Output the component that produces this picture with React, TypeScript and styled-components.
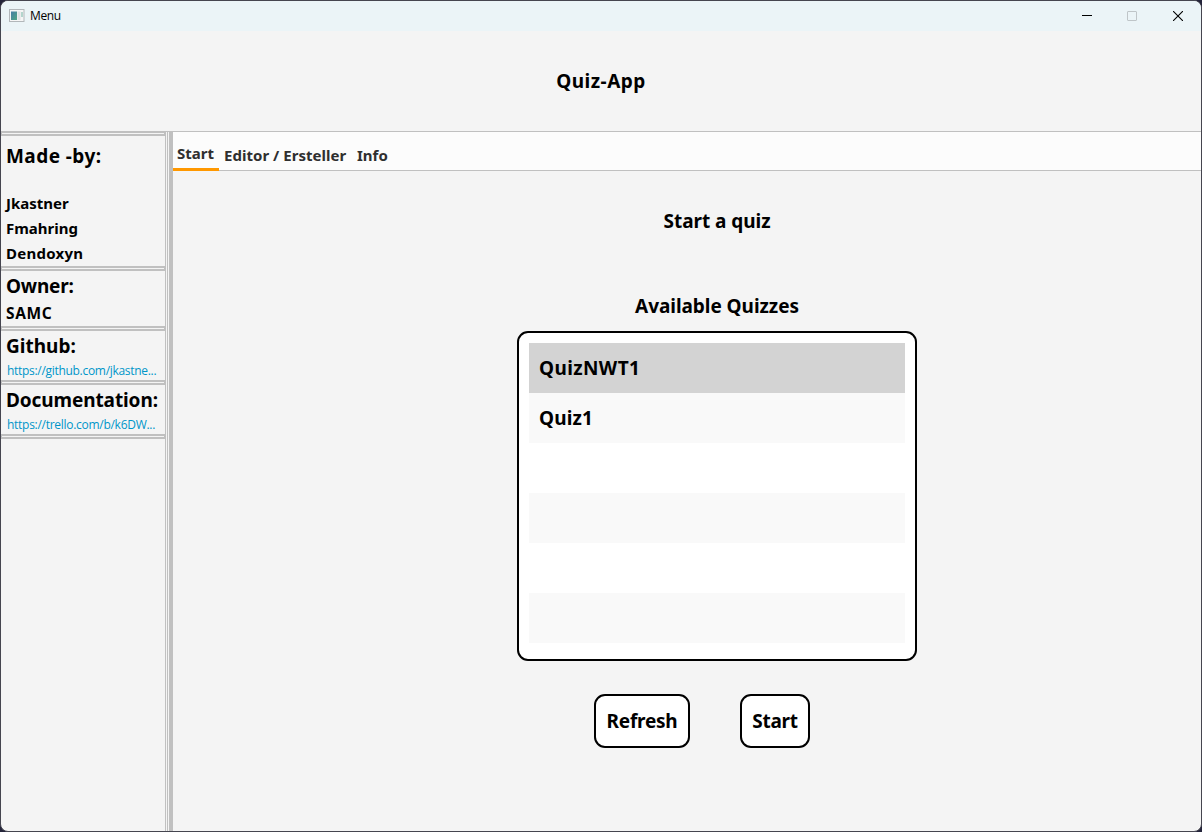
import React from "react";
import styled, { createGlobalStyle } from "styled-components";

const GlobalStyle = createGlobalStyle`
  * { box-sizing: border-box; }
  body { margin: 0; background: #24243a; font-family: "Noto Sans", "Open Sans", sans-serif; }
`;

const Window = styled.div`
  width: 1202px;
  height: 832px;
  display: flex;
  flex-direction: column;
  overflow: hidden;
  border: 1px solid #45454f;
  border-radius: 8px;
  background: #f4f4f4;
  color: #000;
`;

const TitleBar = styled.header`
  height: 30px;
  flex: none;
  display: flex;
  align-items: center;
  padding-left: 8px;
  background: #ebf4f7;
`;

const WindowTitle = styled.span`
  flex: 1;
  margin-left: 5px;
  font: 12px/28px "Open Sans", sans-serif;
  letter-spacing: -0.4px;
`;

const WindowButton = styled.span`
  width: 46px;
  height: 28px;
  display: flex;
  align-items: center;
  justify-content: center;
`;

const MinimizeButton = styled(WindowButton)`
  width: 44px;
`;

const Banner = styled.div`
  height: 100px;
  flex: none;
  display: flex;
  align-items: center;
  justify-content: center;
`;

const Label = styled.span<{ $size: number; $spacing?: number }>`
  font-weight: 700;
  font-size: ${(p) => p.$size}px;
  letter-spacing: ${(p) => p.$spacing ?? 0}px;
  white-space: nowrap;
`;

const Body = styled.div`
  flex: 1;
  display: flex;
  border-top: 1px solid #c0c0c0;
`;

const Sidebar = styled.aside`
  width: 164px;
  flex: none;
  display: flex;
  flex-direction: column;
`;

const Section = styled.section<{ $height: number; $top: number }>`
  height: ${(p) => p.$height}px;
  flex: none;
  display: flex;
  flex-direction: column;
  align-items: flex-start;
  padding: ${(p) => p.$top}px 0 0 5px;
`;

const Rule = styled.div<{ $first?: boolean }>`
  height: ${(p) => (p.$first ? 4 : 5)}px;
  flex: none;
  border: 1px solid #c0c0c0;
  border-top-width: ${(p) => (p.$first ? 1 : 2)}px;
  border-bottom-width: 2px;
  background: #f4f4f4;
`;

const SectionTitle = styled(Label)`
  height: 30px;
  line-height: 30px;
`;

const Names = styled.div`
  display: flex;
  flex-direction: column;
  padding-top: 20px;
  line-height: 25px;
`;

const Owner = styled(Label)`
  line-height: 24px;
`;

const Link = styled.a<{ $spacing: number }>`
  padding-left: 1px;
  color: #0096c9;
  font: 12px/20px "Open Sans", sans-serif;
  letter-spacing: ${(p) => p.$spacing}px;
  white-space: nowrap;
`;

const Divider = styled.div`
  width: 8px;
  flex: none;
  background: linear-gradient(90deg, #c0c0c0 1px, #f4f4f4 1px 2px, #c0c0c0 2px 3px, #f4f4f4 3px 4px, #c0c0c0 4px);
`;

const Content = styled.main`
  flex: 1;
  display: flex;
  flex-direction: column;
`;

const Tabs = styled.nav`
  height: 39px;
  flex: none;
  display: flex;
  background: #fcfcfc;
  border-bottom: 1px solid #c0c0c0;
  color: #2f2f2f;
`;

const Tab = styled.div<{ $width: number; $active?: boolean }>`
  width: ${(p) => p.$width}px;
  height: 39px;
  padding: ${(p) => (p.$active ? 9 : 11)}px 0 0 ${(p) => (p.$active ? 4 : 5)}px;
  line-height: 24px;
  border-bottom: ${(p) => (p.$active ? "3px solid #ff9800" : "0")};
`;

const Panel = styled.div`
  flex: 1;
  display: flex;
  flex-direction: column;
  align-items: center;
  padding-top: 35px;
  padding-left: 60px;
`;

const Heading = styled(Label)`
  height: 30px;
  line-height: 30px;
`;

const ListHeading = styled(Heading)`
  margin-top: 55px;
`;

const QuizList = styled.div`
  width: 400px;
  height: 330px;
  margin: 10px 0 33px;
  padding: 10px;
  border: 2px solid #000;
  border-radius: 11px;
  background: #fff;
`;

const QuizRow = styled.div<{ $tone: string }>`
  height: 50px;
  padding-left: 10px;
  line-height: 50px;
  background: ${(p) => p.$tone};
`;

const Actions = styled.div`
  display: flex;
  gap: 50px;
  margin-right: 30px;
`;

const Button = styled.button<{ $width: number }>`
  width: ${(p) => p.$width}px;
  height: 54px;
  padding: 0;
  border: 2px solid #000;
  border-radius: 11px;
  background: #fff;
  color: #000;
  font-family: inherit;
`;

const AppIcon = () => (
  <svg width="16" height="14" viewBox="0 0 16 14">
    <defs>
      <linearGradient id="screen" x1="0" y1="0" x2="1" y2="1">
        <stop offset="0" stopColor="#477ea5" />
        <stop offset="1" stopColor="#51a583" />
      </linearGradient>
    </defs>
    <rect x=".5" y=".5" width="14.5" height="12" fill="#f6f6f6" stroke="#b2b7ba" />
    <rect x="2" y="2.5" width="6" height="8.5" fill="url(#screen)" />
    <rect x="8.5" y="2.5" width="3" height="8.5" fill="#e0e2e3" />
    <rect x="12" y="3" width="2" height="5" fill="#b3d5cd" />
  </svg>
);

const quizzes = [
  { name: "QuizNWT1", tone: "#d3d3d3", spacing: 0.4 },
  { name: "Quiz1", tone: "#f9f9f9", spacing: 0.15 },
  { name: "", tone: "#fff" },
  { name: "", tone: "#f9f9f9" },
  { name: "", tone: "#fff" },
  { name: "", tone: "#f9f9f9" },
];

export default function App() {
  return (
    <>
      <GlobalStyle />
      <Window>
        <TitleBar>
          <AppIcon />
          <WindowTitle>Menu</WindowTitle>
          <MinimizeButton>
            <svg width="10" height="10"><path d="M0 4.5H10" stroke="#000" /></svg>
          </MinimizeButton>
          <WindowButton>
            <svg width="10" height="10"><rect x=".5" y=".5" width="9" height="9" rx=".5" fill="none" stroke="#bfc5c8" /></svg>
          </WindowButton>
          <WindowButton>
            <svg width="10" height="10"><path d="M0 0L10 10M10 0L0 10" stroke="#000" strokeWidth="1.1" /></svg>
          </WindowButton>
        </TitleBar>
        <Banner><Label $size={19} $spacing={0.5}>Quiz-App</Label></Banner>
        <Body>
          <Sidebar>
            <Rule $first />
            <Section $height={130} $top={5}>
              <SectionTitle $size={19} $spacing={0.45}>Made -by:</SectionTitle>
              <Names>
                <Label $size={15}>Jkastner</Label>
                <Label $size={15}>Fmahring</Label>
                <Label $size={15} $spacing={0.25}>Dendoxyn</Label>
              </Names>
            </Section>
            <Rule />
            <Section $height={55} $top={0}>
              <SectionTitle $size={19} $spacing={-0.2}>Owner:</SectionTitle>
              <Owner $size={15.5} $spacing={0.6}>SAMC</Owner>
            </Section>
            <Rule />
            <Section $height={49} $top={0}>
              <SectionTitle $size={19}>Github:</SectionTitle>
              <Link $spacing={-0.3}>https://github.com/jkastne...</Link>
            </Section>
            <Rule />
            <Section $height={49} $top={0}>
              <SectionTitle $size={19} $spacing={-0.1}>Documentation:</SectionTitle>
              <Link $spacing={-0.28}>https://trello.com/b/k6DW...</Link>
            </Section>
            <Rule />
          </Sidebar>
          <Divider />
          <Content>
            <Tabs>
              <Tab $width={46} $active><Label $size={15}>Start</Label></Tab>
              <Tab $width={133}><Label $size={15} $spacing={0.03}>Editor / Ersteller</Label></Tab>
              <Tab $width={50}><Label $size={15}>Info</Label></Tab>
            </Tabs>
            <Panel>
              <Heading $size={19} $spacing={-0.05}>Start a quiz</Heading>
              <ListHeading $size={19} $spacing={-0.05}>Available Quizzes</ListHeading>
              <QuizList>
                {quizzes.map((quiz, i) => (
                  <QuizRow key={i} $tone={quiz.tone}>
                    <Label $size={19} $spacing={quiz.spacing}>{quiz.name}</Label>
                  </QuizRow>
                ))}
              </QuizList>
              <Actions>
                <Button $width={96}><Label $size={19} $spacing={-0.25}>Refresh</Label></Button>
                <Button $width={70}><Label $size={19} $spacing={-0.25}>Start</Label></Button>
              </Actions>
            </Panel>
          </Content>
        </Body>
      </Window>
    </>
  );
}
